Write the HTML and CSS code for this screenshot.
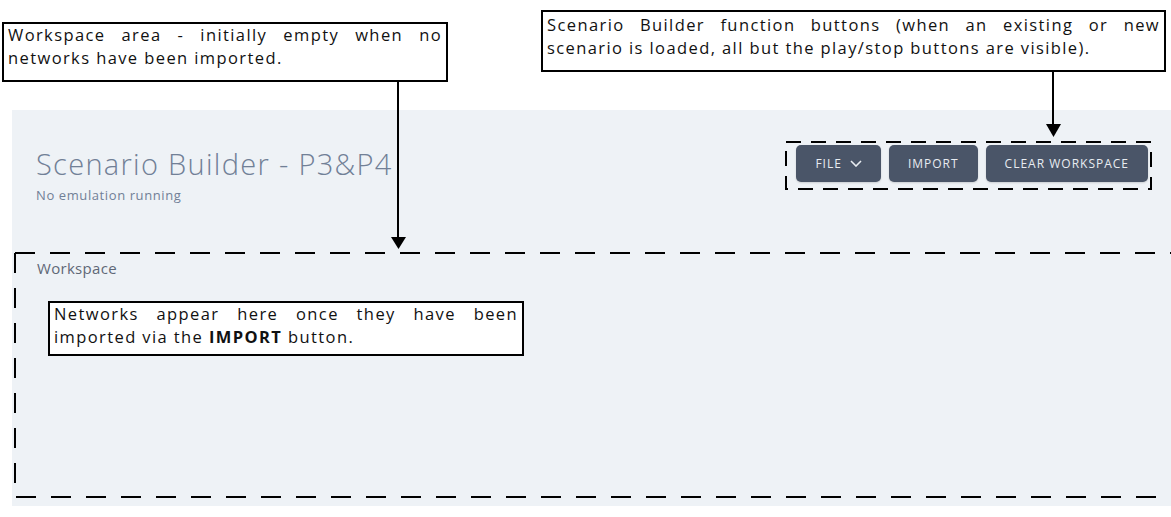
FILE: index.html
```html
<!DOCTYPE html>
<html>
<head>
  <title>Scenario Builder</title>
  <link rel="stylesheet" href="styles.css">
</head>
<body>
  <div class="page">
    <div class="builder">
      <div class="builder-head">
        <div class="title-block">
          <h1>Scenario Builder - P3&amp;P4</h1>
          <p class="status">No emulation running</p>
        </div>
        <div class="actions">
          <button class="btn">FILE
            <svg class="chev" width="12" height="7" viewBox="0 0 12 7"><path d="M1 1l5 5 5-5" fill="none" stroke="currentColor" stroke-width="1.6"/></svg>
          </button>
          <button class="btn">IMPORT</button>
          <button class="btn">CLEAR WORKSPACE</button>
        </div>
      </div>
      <div class="workspace">
        <h2>Workspace</h2>
      </div>
    </div>

    <!-- annotations -->
    <div class="note note-workspace">
      <span class="fill">Workspace area - initially empty when no</span>
      <span>networks have been imported.</span>
    </div>
    <div class="note note-buttons">
      <span class="fill">Scenario Builder function buttons (when an existing or new</span>
      <span>scenario is loaded, all but the play/stop buttons are visible).</span>
    </div>
    <div class="note note-networks">
      <span class="fill">Networks appear here once they have been</span>
      <span>imported via the <b>IMPORT</b> button.</span>
    </div>

    <svg class="marks" width="1171" height="517" viewBox="0 0 1171 517">
      <!-- workspace outline -->
      <path d="M15 253H1180" class="dash"/>
      <path d="M15 253V497H1180" class="dash"/>
      <!-- buttons outline -->
      <path d="M786 142H1151V189H786Z" class="dash small"/>
      <!-- arrows -->
      <line x1="398" y1="82" x2="398" y2="238" class="arrow"/>
      <polygon points="391,237 406,237 398.5,249" fill="#000"/>
      <line x1="1053" y1="72" x2="1053" y2="125" class="arrow"/>
      <polygon points="1046,124 1061,124 1053.5,137" fill="#000"/>
    </svg>
  </div>
</body>
</html>
```

FILE: styles.css
```css
body {
  margin: 0;
  background: #fff;
}

.page {
  position: relative;
  width: 1171px;
  height: 517px;
  overflow: hidden;
}

.builder {
  margin: 110px 0 0 12px;
  height: 396px;
  background-color: #eef2f6;
}

.builder-head {
  display: flex;
  justify-content: space-between;
  align-items: flex-start;
  padding: 35px 23px 0 24px;
}

h1 {
  margin: 1px 0 0;
  font-family: "Open Sans", sans-serif;
  font-weight: 300;
  font-size: 29px;
  line-height: 35px;
  letter-spacing: 1.3px;
  color: #718096;
}

.status {
  margin: 6px 0 0;
  font-family: "Open Sans", sans-serif;
  font-size: 13px;
  line-height: 16px;
  letter-spacing: 0.6px;
  color: #718096;
}

.actions {
  display: flex;
  gap: 8px;
}

.btn {
  display: flex;
  align-items: center;
  gap: 8px;
  height: 37px;
  padding: 0 19px;
  border: none;
  border-radius: 5px;
  background-color: #4a5568;
  box-shadow: 0 1px 2px rgba(0, 0, 0, 0.15);
  font-family: "Open Sans", sans-serif;
  font-size: 12px;
  font-weight: 500;
  letter-spacing: 1px;
  color: #e8ecf1;
}

.workspace {
  padding: 56px 25px 0;
}

h2 {
  margin: 0;
  font-family: "Open Sans", sans-serif;
  font-weight: 400;
  font-size: 15px;
  line-height: 18px;
  letter-spacing: 0.3px;
  color: #5f6877;
}

/* annotation callouts */
.note {
  position: absolute;
  box-sizing: border-box;
  border: 2px solid #000;
  background: #fff;
  padding: 0 4px;
  font-family: "Open Sans", sans-serif;
  font-size: 16.5px;
  line-height: 22.5px;
  letter-spacing: 1.4px;
  color: #111;
}

.note span {
  display: block;
  white-space: nowrap;
}

.note .fill {
  text-align: justify;
  text-align-last: justify;
}

.note b {
  font-weight: 700;
}

.note-workspace {
  left: 2px;
  top: 22px;
  width: 446px;
  height: 60px;
}

.note-buttons {
  left: 541px;
  top: 10px;
  width: 625px;
  height: 62px;
  padding-top: 2px;
}

.note-networks {
  left: 48px;
  top: 301px;
  width: 476px;
  height: 55px;
}

.marks {
  position: absolute;
  left: 0;
  top: 0;
  pointer-events: none;
}

.dash {
  fill: none;
  stroke: #000;
  stroke-width: 2;
  stroke-dasharray: 20 15;
}

.dash.small {
  stroke-dasharray: 15 10;
}

.arrow {
  stroke: #000;
  stroke-width: 2;
}
```
